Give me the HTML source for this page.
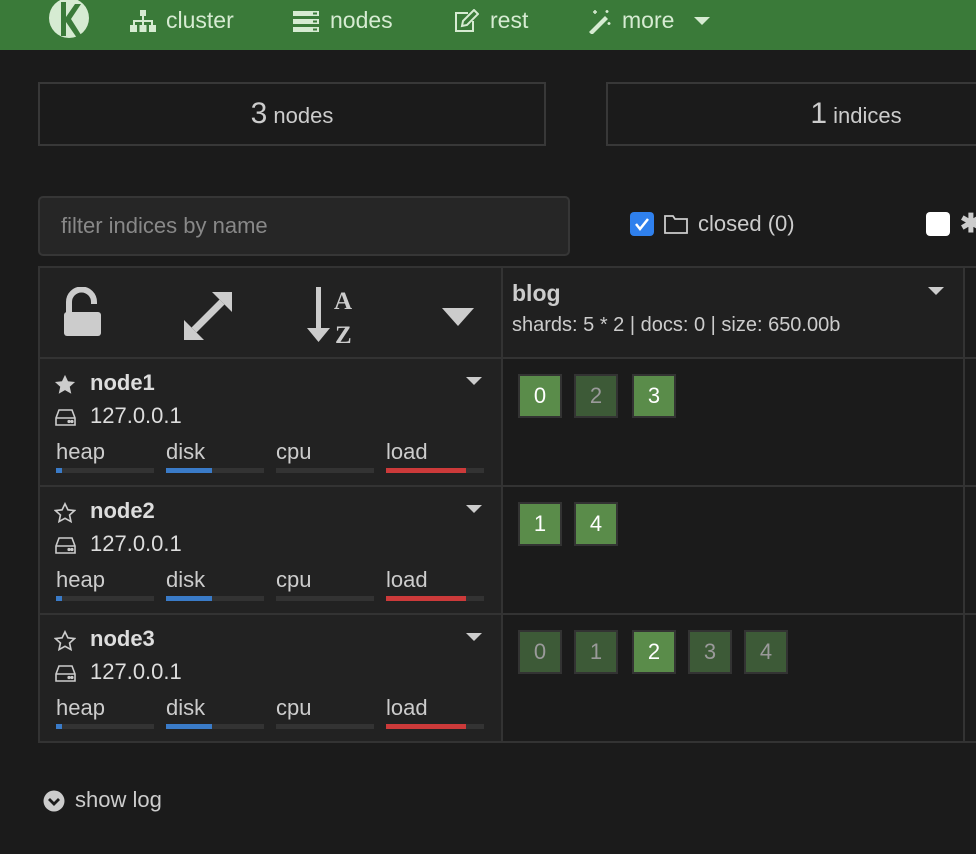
<!DOCTYPE html>
<html><head><meta charset="utf-8"><style>
*{box-sizing:border-box;margin:0;padding:0}
body{width:976px;height:854px;overflow:hidden;background:#1b1b1b;font-family:"Liberation Sans",sans-serif;color:#ccc;position:relative}
.a{position:absolute}
.nav{left:0;top:0;width:976px;height:50px;background:#3a7a39}
.nv{color:#d6ebd2;font-size:23px;top:7px}
.box{border:2px solid #383838;background:#1b1b1b;text-align:center;font-size:22px;color:#ccc}
.box b{font-weight:normal;font-size:30px}
.cell{border:2px solid #333}
.sh{width:44px;height:44px;border:2px solid #333;font-size:22px;text-align:center;line-height:40px}
.p{background:#5a8c4a;color:#fff}
.r{background:#3d5a37;color:#9a9a9a}
.nm{font-weight:bold;font-size:22px;color:#ddd}
.ip{font-size:22px;color:#ddd}
.ml{font-size:22px;color:#ccc}
.bar{height:5px;width:98px;background:#333}
.bar i{display:block;height:5px}
.tri{width:0;height:0;border-left:8px solid transparent;border-right:8px solid transparent;border-top:8px solid #ccc}
</style></head><body>
<div class="a nav"></div>
<svg class="a" style="left:48px;top:0" width="42" height="40" viewBox="0 0 42 40"><circle cx="21" cy="18" r="20" fill="#d6ebd2"/><path d="M13 2v34h5V22l11 16h6L23 19 33 4h-6L18 17V2z" fill="#3a7a39"/></svg>
<svg class="a" style="left:130px;top:10px" width="26" height="24" viewBox="0 0 26 24" fill="#d6ebd2"><rect x="10" y="0" width="6" height="6"/><rect x="12" y="6" width="2" height="5"/><rect x="3" y="10" width="20" height="2"/><rect x="3" y="10" width="2" height="6"/><rect x="12" y="10" width="2" height="6"/><rect x="21" y="10" width="2" height="6"/><rect x="0" y="15" width="7" height="7"/><rect x="9.5" y="15" width="7" height="7"/><rect x="19" y="15" width="7" height="7"/></svg>
<div class="a nv" style="left:166px">cluster</div>
<svg class="a" style="left:293px;top:11px" width="26" height="21" viewBox="0 0 26 21" fill="#d6ebd2"><rect y="0" width="26" height="5"/><rect y="8" width="26" height="5"/><rect y="16" width="26" height="5"/><rect x="20" y="1.5" width="4" height="2" fill="#3a7a39"/><rect x="20" y="9.5" width="4" height="2" fill="#3a7a39"/><rect x="20" y="17.5" width="4" height="2" fill="#3a7a39"/></svg>
<div class="a nv" style="left:330px">nodes</div>
<svg class="a" style="left:453px;top:9px" width="26" height="24" viewBox="0 0 26 24" fill="none" stroke="#d6ebd2" stroke-width="2"><path d="M15 4H3v18h17V12"/><path d="M9 17l1-5 11-11 4 4-11 11z"/></svg>
<div class="a nv" style="left:490px">rest</div>
<svg class="a" style="left:587px;top:8px" width="26" height="26" viewBox="0 0 26 26" fill="#d6ebd2"><path d="M2 24l16-16 3 3-16 16z"/><path d="M8 2v4M6 4h4M20 2v3M18.5 3.5h3M22 14v3M20.5 15.5h3" stroke="#d6ebd2" stroke-width="1.5"/></svg>
<div class="a nv" style="left:622px">more</div>
<div class="a tri" style="left:694px;top:17px;border-top-color:#d6ebd2"></div>

<div class="a box" style="left:38px;top:82px;width:508px;height:64px;line-height:60px"><b>3</b> nodes</div>
<div class="a box" style="left:606px;top:82px;width:380px;height:64px;line-height:60px;padding-left:120px"><b>1</b> indices</div>

<div class="a" style="left:38px;top:196px;width:532px;height:60px;background:#262626;border:2px solid #363636;border-radius:5px;font-size:22px;color:#888;padding:15px 0 0 21px">filter indices by name</div>
<div class="a" style="left:630px;top:212px;width:24px;height:24px;background:#2f80ed;border-radius:4px"></div>
<svg class="a" style="left:630px;top:212px" width="24" height="24"><path d="M6 12l4 5 8-10" stroke="#fff" stroke-width="2.5" fill="none"/></svg>
<svg class="a" style="left:664px;top:213px" width="24" height="22" viewBox="0 0 24 22" fill="none" stroke="#ccc" stroke-width="1.8"><path d="M1 3h8l2 3h12v14H1z"/></svg>
<div class="a" style="left:698px;top:211px;font-size:22px;color:#ccc">closed (0)</div>
<div class="a" style="left:926px;top:212px;width:24px;height:24px;background:#fff;border-radius:4px"></div>
<div class="a" style="left:960px;top:208px;font-size:26px;color:#ccc;font-weight:bold">✱</div>

<!-- table -->
<div class="a cell" style="left:38px;top:266px;width:465px;height:93px;background:#222"></div>
<div class="a cell" style="left:501px;top:266px;width:464px;height:93px;background:#202020"></div>
<div class="a cell" style="left:963px;top:266px;width:20px;height:93px"></div>
<div class="a cell" style="left:38px;top:357px;width:465px;height:130px;background:#222"></div>
<div class="a cell" style="left:501px;top:357px;width:464px;height:130px"></div>
<div class="a cell" style="left:963px;top:357px;width:20px;height:130px"></div>
<div class="a cell" style="left:38px;top:485px;width:465px;height:130px;background:#222"></div>
<div class="a cell" style="left:501px;top:485px;width:464px;height:130px"></div>
<div class="a cell" style="left:963px;top:485px;width:20px;height:130px"></div>
<div class="a cell" style="left:38px;top:613px;width:465px;height:130px;background:#222"></div>
<div class="a cell" style="left:501px;top:613px;width:464px;height:130px"></div>
<div class="a cell" style="left:963px;top:613px;width:20px;height:130px"></div>

<!-- header icons -->
<svg class="a" style="left:62px;top:287px" width="42" height="52" viewBox="0 0 42 52"><path d="M7 27V15a12.5 12.5 0 0 1 25 0v2" stroke="#ccc" stroke-width="6" fill="none"/><rect x="2" y="25" width="37" height="24" rx="3" fill="#ccc"/></svg>
<svg class="a" style="left:183px;top:291px" width="50" height="50" viewBox="0 0 50 50" fill="#ccc"><path d="M11 39L39 11" stroke="#ccc" stroke-width="7"/><path d="M29 1h20v20z"/><path d="M21 49H1V29z"/></svg>
<svg class="a" style="left:306px;top:287px" width="56" height="60" viewBox="0 0 56 60"><rect x="10" y="0" width="5" height="45" fill="#ccc"/><path d="M1 41h23L12.5 55z" fill="#ccc"/><text x="28" y="22" font-family="Liberation Serif,serif" font-weight="bold" font-size="25" fill="#ccc">A</text><text x="29" y="56" font-family="Liberation Serif,serif" font-weight="bold" font-size="25" fill="#ccc">Z</text></svg>
<div class="a tri" style="left:442px;top:308px;border-left-width:16px;border-right-width:16px;border-top-width:18px"></div>
<div class="a" style="left:512px;top:280px;font-size:23px;font-weight:bold;color:#ccc">blog</div>
<div class="a" style="left:512px;top:314px;font-size:20px;color:#ccc">shards: 5 * 2 | docs: 0 | size: 650.00b</div>
<div class="a tri" style="left:928px;top:287px"></div>

<!-- nodes -->
<svg class="a" style="left:54px;top:374px" width="22" height="21" viewBox="0 0 24 23"><path d="M12 1l3.3 7 7.7.8-5.8 5.2 1.7 7.6L12 17.7 5.1 21.6l1.7-7.6L1 8.8l7.7-.8z" fill="#ccc"/></svg>
<div class="a nm" style="left:90px;top:370px">node1</div>
<div class="a ip" style="left:90px;top:403px">127.0.0.1</div>
<svg class="a" style="left:55px;top:408px" width="21" height="18" viewBox="0 0 21 18" fill="none" stroke="#ccc" stroke-width="1.6"><path d="M4 2h13l3 8v7H1v-7z M1 10h19"/><circle cx="14" cy="13.5" r=".8" fill="#ccc"/><circle cx="17" cy="13.5" r=".8" fill="#ccc"/></svg>
<div class="a tri" style="left:466px;top:377px"></div>

<svg class="a" style="left:54px;top:502px" width="22" height="21" viewBox="0 0 24 23"><path d="M12 2l3.2 6.6 7.2.8-5.4 4.9 1.5 7.1L12 17.8 5.5 21.4 7 14.3 1.6 9.4l7.2-.8z" fill="none" stroke="#ccc" stroke-width="1.8"/></svg>
<div class="a nm" style="left:90px;top:498px">node2</div>
<div class="a ip" style="left:90px;top:531px">127.0.0.1</div>
<svg class="a" style="left:55px;top:536px" width="21" height="18" viewBox="0 0 21 18" fill="none" stroke="#ccc" stroke-width="1.6"><path d="M4 2h13l3 8v7H1v-7z M1 10h19"/><circle cx="14" cy="13.5" r=".8" fill="#ccc"/><circle cx="17" cy="13.5" r=".8" fill="#ccc"/></svg>
<div class="a tri" style="left:466px;top:505px"></div>

<svg class="a" style="left:54px;top:630px" width="22" height="21" viewBox="0 0 24 23"><path d="M12 2l3.2 6.6 7.2.8-5.4 4.9 1.5 7.1L12 17.8 5.5 21.4 7 14.3 1.6 9.4l7.2-.8z" fill="none" stroke="#ccc" stroke-width="1.8"/></svg>
<div class="a nm" style="left:90px;top:626px">node3</div>
<div class="a ip" style="left:90px;top:659px">127.0.0.1</div>
<svg class="a" style="left:55px;top:664px" width="21" height="18" viewBox="0 0 21 18" fill="none" stroke="#ccc" stroke-width="1.6"><path d="M4 2h13l3 8v7H1v-7z M1 10h19"/><circle cx="14" cy="13.5" r=".8" fill="#ccc"/><circle cx="17" cy="13.5" r=".8" fill="#ccc"/></svg>
<div class="a tri" style="left:466px;top:633px"></div>

<!-- metrics rows -->
<div class="a ml" style="left:56px;top:439px">heap</div><div class="a ml" style="left:166px;top:439px">disk</div><div class="a ml" style="left:276px;top:439px">cpu</div><div class="a ml" style="left:386px;top:439px">load</div>
<div class="a bar" style="left:56px;top:468px"><i style="width:6px;background:#3a7bc8"></i></div><div class="a bar" style="left:166px;top:468px"><i style="width:46px;background:#3a7bc8"></i></div><div class="a bar" style="left:276px;top:468px"></div><div class="a bar" style="left:386px;top:468px"><i style="width:80px;background:#cc3a3a"></i></div>
<div class="a ml" style="left:56px;top:567px">heap</div><div class="a ml" style="left:166px;top:567px">disk</div><div class="a ml" style="left:276px;top:567px">cpu</div><div class="a ml" style="left:386px;top:567px">load</div>
<div class="a bar" style="left:56px;top:596px"><i style="width:6px;background:#3a7bc8"></i></div><div class="a bar" style="left:166px;top:596px"><i style="width:46px;background:#3a7bc8"></i></div><div class="a bar" style="left:276px;top:596px"></div><div class="a bar" style="left:386px;top:596px"><i style="width:80px;background:#cc3a3a"></i></div>
<div class="a ml" style="left:56px;top:695px">heap</div><div class="a ml" style="left:166px;top:695px">disk</div><div class="a ml" style="left:276px;top:695px">cpu</div><div class="a ml" style="left:386px;top:695px">load</div>
<div class="a bar" style="left:56px;top:724px"><i style="width:6px;background:#3a7bc8"></i></div><div class="a bar" style="left:166px;top:724px"><i style="width:46px;background:#3a7bc8"></i></div><div class="a bar" style="left:276px;top:724px"></div><div class="a bar" style="left:386px;top:724px"><i style="width:80px;background:#cc3a3a"></i></div>

<!-- shards -->
<div class="a sh p" style="left:518px;top:374px">0</div><div class="a sh r" style="left:574px;top:374px">2</div><div class="a sh p" style="left:632px;top:374px">3</div>
<div class="a sh p" style="left:518px;top:502px">1</div><div class="a sh p" style="left:574px;top:502px">4</div>
<div class="a sh r" style="left:518px;top:630px">0</div><div class="a sh r" style="left:574px;top:630px">1</div><div class="a sh p" style="left:632px;top:630px">2</div><div class="a sh r" style="left:688px;top:630px">3</div><div class="a sh r" style="left:744px;top:630px">4</div>

<svg class="a" style="left:43px;top:790px" width="22" height="22" viewBox="0 0 22 22"><circle cx="11" cy="11" r="10.5" fill="#ccc"/><path d="M6 9l5 5 5-5" stroke="#1b1b1b" stroke-width="2.8" fill="none"/></svg>
<div class="a" style="left:75px;top:787px;font-size:22px;color:#ccc">show log</div>
</body></html>
